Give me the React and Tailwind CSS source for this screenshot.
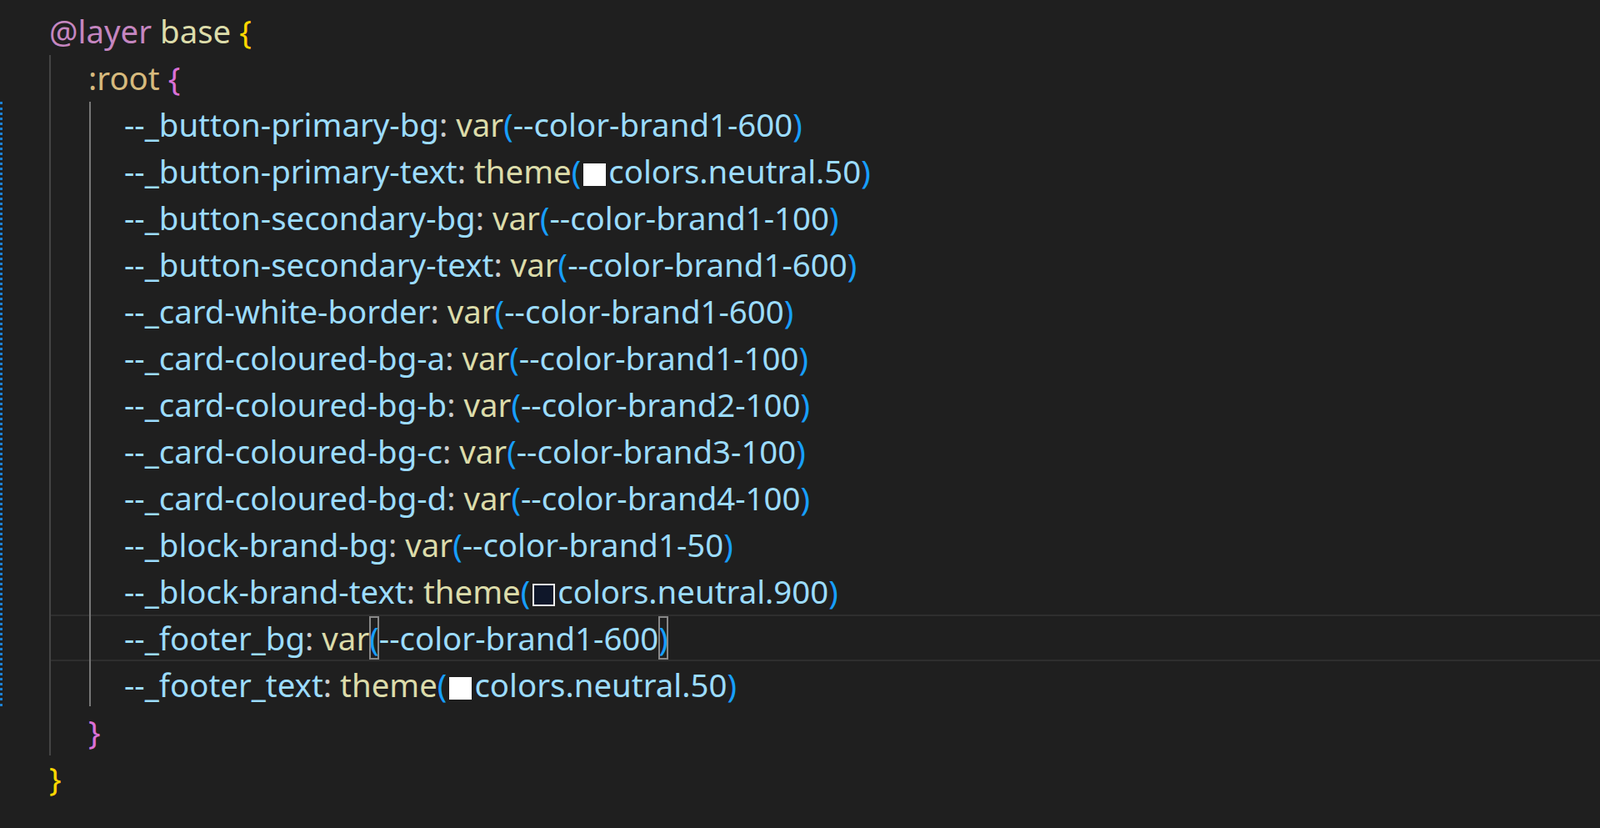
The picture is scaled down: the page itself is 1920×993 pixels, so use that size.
import React from "react";

const P = ({ children }) => <span className="text-[#9cdcfe]">{children}</span>;
const F = ({ children }) => <span className="text-[#dcdcaa]">{children}</span>;
const B = ({ children, box }) => (
  <span className={"text-[#179fff] " + (box ? "outline outline-2 outline-[#888] -outline-offset-2" : "")}>{children}</span>
);
const Sw = ({ dark }) => (
  <span
    className={
      "inline-block w-[27px] h-[27px] mx-[3px] align-[-3px] border-2 " +
      (dark ? "bg-[#0f172a] border-[#eee]" : "bg-white border-white")
    }
  />
);

const vars = [
  ["--_button-primary-bg", "brand1-600"],
  ["--_button-primary-text", null, "neutral.50"],
  ["--_button-secondary-bg", "brand1-100"],
  ["--_button-secondary-text", "brand1-600"],
  ["--_card-white-border", "brand1-600"],
  ["--_card-coloured-bg-a", "brand1-100"],
  ["--_card-coloured-bg-b", "brand2-100"],
  ["--_card-coloured-bg-c", "brand3-100"],
  ["--_card-coloured-bg-d", "brand4-100"],
  ["--_block-brand-bg", "brand1-50"],
  ["--_block-brand-text", null, "neutral.900", true],
  ["--_footer_bg", "brand1-600", null, false, true],
  ["--_footer_text", null, "neutral.50"],
];

export default function App() {
  return (
    <div className="relative w-[1920px] h-[993px] bg-[#1f1f1f] overflow-hidden font-['DejaVu_Sans_Mono'] text-[38.4px] text-[#cccccc] whitespace-pre">
      {/* git gutter */}
      <div className="absolute left-0 top-[122px] w-[5px] h-[725px] border-l-[3px] border-dotted border-[#1b81d4]" />
      {/* indent guides */}
      <div className="absolute left-[59px] top-[66px] w-[2px] h-[840px] bg-[#444]" />
      <div className="absolute left-[107px] top-[122px] w-[2px] h-[725px] bg-[#777]" />
      <div className="pt-[9px]">
        <div className="h-[56px] leading-[56px] pl-[59px]">
          <span className="text-[#c586c0]">@layer</span> <F>base</F> <span className="text-[#ffd700]">{"{"}</span>
        </div>
        <div className="h-[56px] leading-[56px] pl-[106px]">
          <span className="text-[#d7ba7d]">:root</span> <span className="text-[#da70d6]">{"{"}</span>
        </div>
        {vars.map(([name, v, t, dark, active]) => (
          <div
            key={name}
            className={
              active
                ? "h-[56px] leading-[52px] ml-[60px] pl-[89px] border-y-2 border-[#2e2e2e]"
                : "h-[56px] leading-[56px] pl-[149px]"
            }
          >
            <P>{name}</P>:{" "}
            {v ? (
              <>
                <F>var</F>
                <B box={active}>(</B>
                <P>--color-{v}</P>
                <B box={active}>)</B>
              </>
            ) : (
              <>
                <F>theme</F>
                <B>(</B>
                <Sw dark={dark} />
                <P>colors.{t}</P>
                <B>)</B>
              </>
            )}
          </div>
        ))}
        <div className="h-[56px] leading-[56px] pl-[106px]">
          <span className="text-[#da70d6]">{"}"}</span>
        </div>
        <div className="h-[56px] leading-[56px] pl-[59px]">
          <span className="text-[#ffd700]">{"}"}</span>
        </div>
      </div>
    </div>
  );
}
